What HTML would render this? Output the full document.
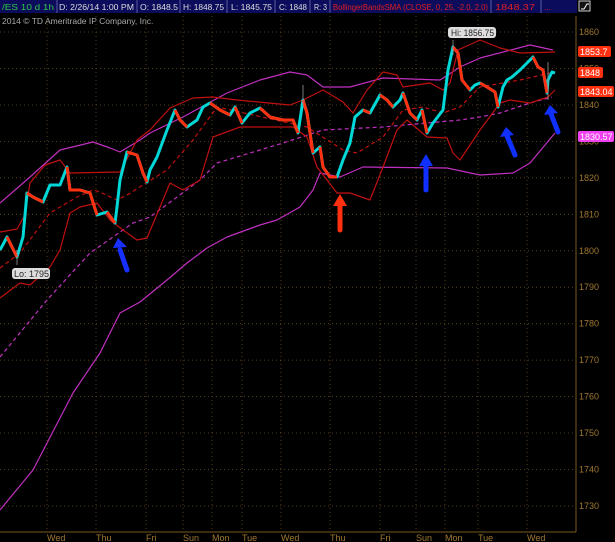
<!DOCTYPE html>
<html><head><style>
html,body{margin:0;padding:0;background:#000;width:615px;height:542px;overflow:hidden;font-family:"Liberation Sans",sans-serif}
</style></head><body>
<svg width="615" height="542" viewBox="0 0 615 542" xmlns="http://www.w3.org/2000/svg" font-family="Liberation Sans, sans-serif">
<rect width="615" height="542" fill="#000"/>
<rect x="0" y="0" width="577" height="13" fill="#0c0c5c"/>
<g stroke="#5a5aa0" stroke-width="1">
<line x1="57" y1="0" x2="57" y2="13"/><line x1="137" y1="0" x2="137" y2="13"/><line x1="180" y1="0" x2="180" y2="13"/><line x1="227" y1="0" x2="227" y2="13"/><line x1="275" y1="0" x2="275" y2="13"/><line x1="310" y1="0" x2="310" y2="13"/><line x1="330" y1="0" x2="330" y2="13"/><line x1="491" y1="0" x2="491" y2="13"/><line x1="541" y1="0" x2="541" y2="13"/>
</g>
<g font-size="8.5" fill="#ddd">
<text x="2" y="10" fill="#2ecc40" textLength="52" lengthAdjust="spacingAndGlyphs">/ES 10 d 1h</text>
<text x="59" y="10" textLength="75" lengthAdjust="spacingAndGlyphs">D: 2/26/14 1:00 PM</text>
<text x="140" y="10" textLength="38" lengthAdjust="spacingAndGlyphs">O: 1848.5</text>
<text x="183" y="10" textLength="41" lengthAdjust="spacingAndGlyphs">H: 1848.75</text>
<text x="231" y="10" textLength="41" lengthAdjust="spacingAndGlyphs">L: 1845.75</text>
<text x="279" y="10" textLength="28" lengthAdjust="spacingAndGlyphs">C: 1848</text>
<text x="314" y="10" textLength="13" lengthAdjust="spacingAndGlyphs">R: 3</text>
<text x="333" y="10" fill="#e02020" textLength="155" lengthAdjust="spacingAndGlyphs">BollingerBandsSMA (CLOSE, 0, 25, -2.0, 2.0)</text>
<text x="495" y="10" fill="#e02020" textLength="40" lengthAdjust="spacingAndGlyphs">1848.37</text>
<text x="544" y="10" fill="#e02020">...</text>
</g>
<rect x="578" y="0" width="37" height="16" fill="#000"/>
<rect x="579" y="1" width="11" height="10" fill="#111" stroke="#ccc" stroke-width="1"/>
<path d="M581 9 L584 9 L587 4 L589 4" stroke="#fff" fill="none"/>
<text x="2" y="24" font-size="8.5" fill="#aaa">2014 © TD Ameritrade IP Company, Inc.</text>
<g stroke="#6a5020" stroke-width="0.8" stroke-dasharray="1,3">
<line x1="0" y1="32" x2="576" y2="32"/><line x1="0" y1="68.5" x2="576" y2="68.5"/><line x1="0" y1="105" x2="576" y2="105"/><line x1="0" y1="141.4" x2="576" y2="141.4"/><line x1="0" y1="177.8" x2="576" y2="177.8"/><line x1="0" y1="214.3" x2="576" y2="214.3"/><line x1="0" y1="250.8" x2="576" y2="250.8"/><line x1="0" y1="287.2" x2="576" y2="287.2"/><line x1="0" y1="323.7" x2="576" y2="323.7"/><line x1="0" y1="360.1" x2="576" y2="360.1"/><line x1="0" y1="396.6" x2="576" y2="396.6"/><line x1="0" y1="433" x2="576" y2="433"/><line x1="0" y1="469.5" x2="576" y2="469.5"/><line x1="0" y1="506" x2="576" y2="506"/>
<line x1="47" y1="16" x2="47" y2="532"/><line x1="96" y1="16" x2="96" y2="532"/><line x1="146" y1="16" x2="146" y2="532"/><line x1="183" y1="16" x2="183" y2="532"/><line x1="212" y1="16" x2="212" y2="532"/><line x1="242" y1="16" x2="242" y2="532"/><line x1="281" y1="16" x2="281" y2="532"/><line x1="330" y1="16" x2="330" y2="532"/><line x1="380" y1="16" x2="380" y2="532"/><line x1="416" y1="16" x2="416" y2="532"/><line x1="445" y1="16" x2="445" y2="532"/><line x1="478" y1="16" x2="478" y2="532"/><line x1="527" y1="16" x2="527" y2="532"/>
</g>
<line x1="576" y1="16" x2="576" y2="532" stroke="#7a5a20" stroke-width="1"/>
<line x1="0" y1="532" x2="576" y2="532" stroke="#7a5a20" stroke-width="1"/>
<g font-size="9" fill="#a07830">
<text x="579" y="35">1860</text><text x="579" y="71.5">1850</text><text x="579" y="108">1840</text><text x="579" y="144.4">1830</text><text x="579" y="180.8">1820</text><text x="579" y="217.3">1810</text><text x="579" y="253.8">1800</text><text x="579" y="290.2">1790</text><text x="579" y="326.7">1780</text><text x="579" y="363.1">1770</text><text x="579" y="399.6">1760</text><text x="579" y="436">1750</text><text x="579" y="472.5">1740</text><text x="579" y="509">1730</text>
<text x="47" y="541">Wed</text><text x="96" y="541">Thu</text><text x="146" y="541">Fri</text><text x="183" y="541">Sun</text><text x="212" y="541">Mon</text><text x="242" y="541">Tue</text><text x="281" y="541">Wed</text><text x="330" y="541">Thu</text><text x="380" y="541">Fri</text><text x="416" y="541">Sun</text><text x="445" y="541">Mon</text><text x="478" y="541">Tue</text><text x="527" y="541">Wed</text>
</g>
<g fill="none" stroke="#c030c0" stroke-width="1.2" stroke-linejoin="round">
<polyline points="0,203 30,177 60,150 93,142 110,148 120,152 140,140 150,133 183,117 227,93 260,80 290,72 307,75 323,87 350,87 383,78 440,80 460,67 480,58 530,45 553,50"/>
<polyline points="0,510 33,470 73,393 100,353 120,313 140,302 167,280 187,263 207,248 227,237 260,225 277,220 300,207 313,190 320,173 340,177 363,167 447,168 480,175 513,173 530,163 555,133"/>
<polyline stroke-dasharray="4,3" points="0,357 47,300 90,253 133,223 150,217 200,180 217,163 283,143 323,130 383,127 460,120 480,117 500,113 530,103 552,97"/>
</g>
<g fill="none" stroke="#c01010" stroke-width="1.2" stroke-linejoin="round">
<polyline points="0,232 17,229 25,215 30,183 45,165 60,160 70,173 120,172 137,140 150,130 170,108 193,98 213,97 237,100 290,105 303,100 323,90 343,102 353,113 367,90 383,72 397,75 403,87 430,83 443,90 450,83 458,50 480,40 500,48 520,53 555,52"/>
<polyline points="0,298 20,283 30,285 50,267 60,250 70,213 80,207 97,203 110,220 123,230 137,240 147,238 160,207 170,183 183,190 200,180 213,137 240,127 293,127 307,137 317,167 337,193 350,193 370,200 383,167 397,130 407,120 427,137 447,138 453,153 460,160 480,130 500,103 510,100 530,103 548,97 555,90"/>
<polyline stroke-dasharray="4,3" points="0,268 20,253 50,213 77,197 93,190 100,192 117,200 127,195 167,170 193,140 217,107 307,127 343,150 357,153 383,137 403,110 423,107 443,113 460,107 480,87 520,80 550,73"/>
</g>
<g fill="none" stroke-width="3" stroke-linejoin="round">
<polyline stroke="#00d8d8" points="0,250 7,237 17,257 23,237 27,193 33,197 43,202 50,185 60,185 67,167 70,190 80,190 90,193 97,215 107,212 115,223 117,207 120,180 127,152 137,155 143,173 147,182 150,170 157,157 167,130 175,110 180,120 187,127 197,120 203,107 210,103 220,110 230,115 235,107 242,123 250,113 260,108 270,117 283,120 293,120 298,133 303,100 307,113 313,153 320,147 323,167 330,177 337,177 343,160 350,143 355,117 363,110 370,113 380,95 387,100 393,107 400,100 403,93 410,113 417,120 422,110 427,133 433,123 443,110 448,70 453,47 458,53 462,80 470,90 475,85 480,83 487,87 495,92 498,107 503,87 507,80 512,77 520,70 530,60 533,57 538,67 543,70 547,93 548,80 552,72 555,73"/>
<g stroke="#ff3010">
<polyline points="7,237 17,257"/><polyline points="27,193 33,197 43,202"/><polyline points="67,167 70,190 80,190 90,193 97,215"/><polyline points="107,212 115,223"/><polyline points="127,152 137,155 143,173 147,182"/><polyline points="175,110 180,120 187,127"/><polyline points="210,103 220,110 230,115"/><polyline points="235,107 242,123"/><polyline points="260,108 270,117 283,120 293,120 298,133"/><polyline points="303,100 307,113 313,153"/><polyline points="320,147 323,167 330,177 337,177"/><polyline points="363,110 370,113"/><polyline points="380,95 387,100 393,107"/><polyline points="403,93 410,113 417,120"/><polyline points="422,110 427,133"/><polyline points="453,47 458,53 462,80 470,90"/><polyline points="480,83 487,87 495,92 498,107"/><polyline points="533,57 538,67 543,70 547,93"/>
</g>
</g>
<g stroke="#999" stroke-width="0.8">
<line x1="17" y1="250" x2="17" y2="265"/><line x1="303" y1="85" x2="303" y2="105"/><line x1="453" y1="40" x2="453" y2="55"/><line x1="548" y1="62" x2="548" y2="100"/>
</g>
<g stroke-linecap="round" stroke-width="5" fill="none">
<path d="M127 270 L120 250" stroke="#1830ff"/>
<path d="M340 230 L340 205" stroke="#ff3010"/>
<path d="M426 190 L426 164" stroke="#1030ff"/>
<path d="M515 155 L507 136" stroke="#1030ff"/>
<path d="M558 132 L551 114" stroke="#1030ff"/>
</g>
<path d="M113 248 L118 238 L127 247 Z" fill="#1830ff"/>
<path d="M333 206 L340 194 L347 206 Z" fill="#ff3010"/>
<path d="M419 166 L426 154 L433 166 Z" fill="#1030ff"/>
<path d="M500 137 L506 127 L514 135 Z" fill="#1030ff"/>
<path d="M544 115 L550 105 L558 113 Z" fill="#1030ff"/>
<rect x="12" y="268" width="38" height="11" rx="3" fill="#ddd"/>
<text x="14" y="277" font-size="9" fill="#222">Lo: 1795</text>
<rect x="448" y="27" width="48" height="11" rx="3" fill="#ddd"/>
<text x="451" y="36" font-size="9" fill="#222" textLength="43" lengthAdjust="spacingAndGlyphs">Hi: 1856.75</text>
<rect x="578" y="46" width="33" height="11" rx="2" fill="#ff3010"/><text x="580" y="55" font-size="9" fill="#fff">1853.7</text>
<rect x="578" y="67" width="25" height="11" rx="2" fill="#ff3010"/><text x="580" y="76" font-size="9" fill="#fff">1848</text>
<rect x="578" y="86" width="36" height="11" rx="2" fill="#ff3010"/><text x="580" y="95" font-size="9" fill="#fff">1843.04</text>
<rect x="578" y="131" width="36" height="11" rx="2" fill="#f040f0"/><text x="580" y="140" font-size="9" fill="#fff">1830.57</text>
</svg>
</body></html>
